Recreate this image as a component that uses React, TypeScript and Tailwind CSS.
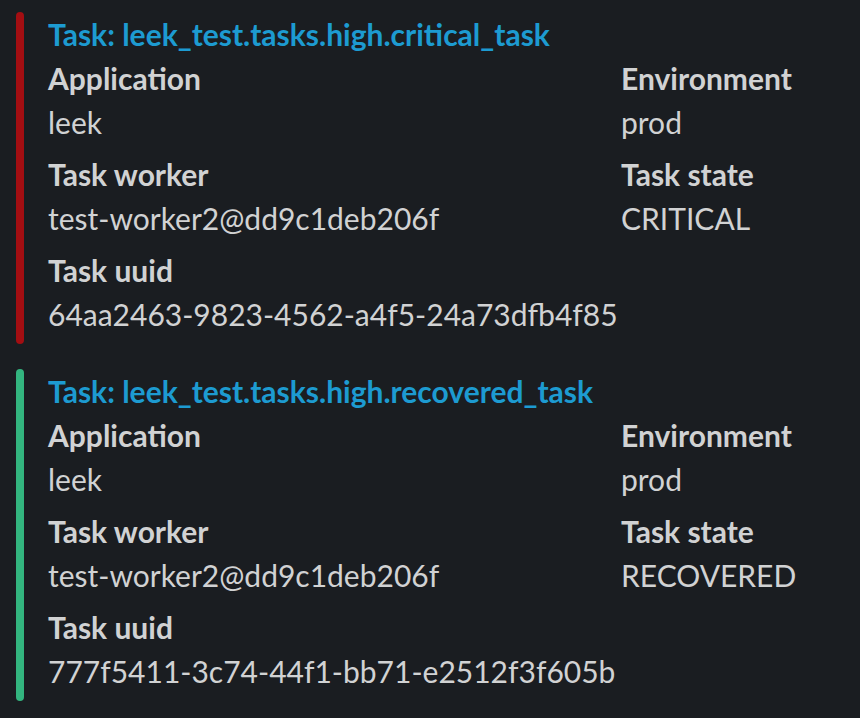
const tasks = [
  {
    name: 'leek_test.tasks.high.critical_task',
    bar: 'bg-[#a30e12]',
    state: 'CRITICAL',
    uuid: '64aa2463-9823-4562-a4f5-24a73dfb4f85',
  },
  {
    name: 'leek_test.tasks.high.recovered_task',
    bar: 'bg-[#33b57f]',
    state: 'RECOVERED',
    uuid: '777f5411-3c74-44f1-bb71-e2512f3f605b',
  },
]

function Field({ label, value }: { label: string; value: string }) {
  return (
    <div className="mb-2">
      <div className="font-bold">{label}</div>
      <div>{value}</div>
    </div>
  )
}

function Attachment({ task }: { task: (typeof tasks)[number] }) {
  return (
    <div className="flex">
      <div className={`w-2 shrink-0 rounded-full ${task.bar}`} />
      <div className="pl-6 pb-0">
        <div className="font-bold text-[#1d9bd1]">Task: {task.name}</div>
        <div className="grid grid-cols-[573px_1fr]">
          <Field label="Application" value="leek" />
          <Field label="Environment" value="prod" />
          <Field label="Task worker" value="test-worker2@dd9c1deb206f" />
          <Field label="Task state" value={task.state} />
          <Field label="Task uuid" value={task.uuid} />
        </div>
      </div>
    </div>
  )
}

export default function App() {
  return (
    <div
      className="h-[718px] bg-[#1a1d21] text-[#d1d2d3] text-[30px] leading-[44px] pl-4 pt-3 flex flex-col gap-[25px] overflow-hidden"
      style={{ fontFamily: 'Lato, "Noto Sans", sans-serif' }}
    >
      {tasks.map((t) => (
        <Attachment key={t.uuid} task={t} />
      ))}
    </div>
  )
}
